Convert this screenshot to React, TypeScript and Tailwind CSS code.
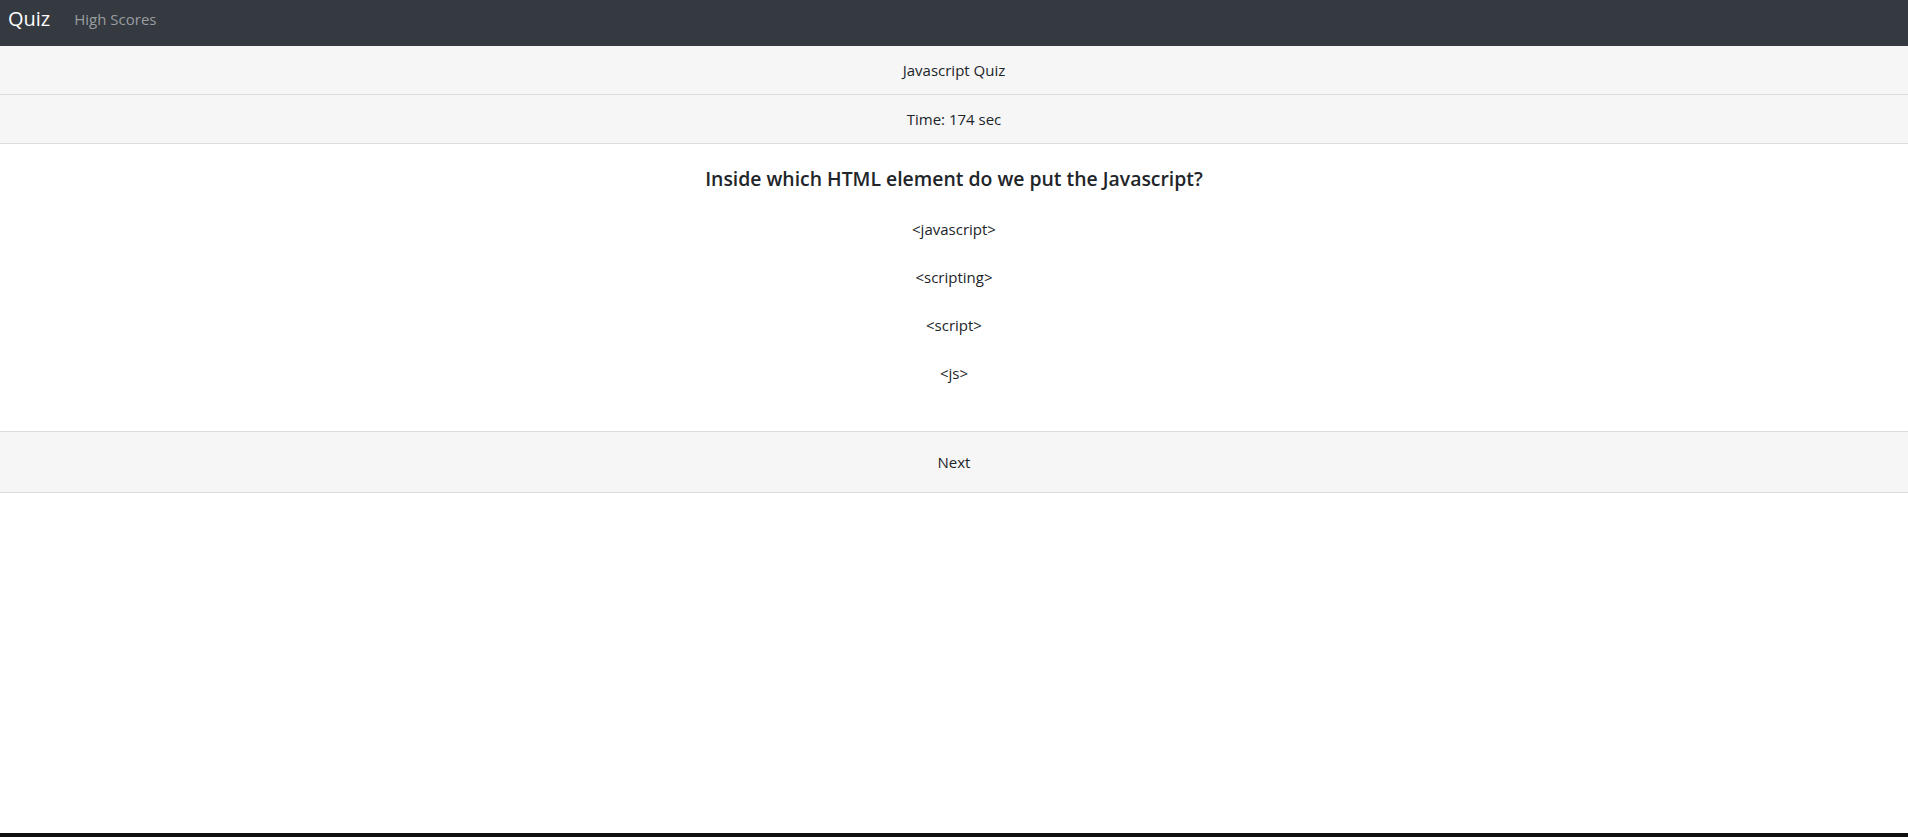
import React from "react";

const options = ["<javascript>", "<scripting>", "<script>", "<js>"];

export default function App() {
  return (
    <div
      className="min-h-screen flex flex-col bg-white text-[#212529]"
      style={{ fontFamily: '"Segoe UI", "Open Sans", sans-serif' }}
    >
      {/* Navbar */}
      <nav className="h-[46px] bg-[#343a40] flex items-center px-2 pb-2">
        <span className="text-[20px] text-white leading-none mr-4">Quiz</span>
        <span className="text-[15px] text-[#999ca0] px-2 leading-none">High Scores</span>
      </nav>

      <div className="h-[49px] bg-[#f6f6f6] border-b border-[#dcdcdc] flex items-center justify-center text-[15px]">
        Javascript Quiz
      </div>
      <div className="h-[49px] bg-[#f6f6f6] border-b border-[#dcdcdc] flex items-center justify-center text-[15px]">
        Time: 174 sec
      </div>

      {/* Question */}
      <div className="pt-[23px] pb-[34px] flex flex-col items-center">
        <h5 className="text-[19.4px] font-semibold leading-6">Inside which HTML element do we put the Javascript?</h5>
        <ul className="mt-[14px] flex flex-col items-center text-[15px]">
          {options.map(o => (
            <li key={o} className="h-12 flex items-center justify-center cursor-pointer">{o}</li>
          ))}
        </ul>
      </div>

      <div className="h-[62px] bg-[#f6f6f6] border-y border-[#dcdcdc] flex items-center justify-center text-[15px]">
        Next
      </div>

      <div className="flex-1" />
      <div className="h-1 bg-[#0f0f0f]" />
    </div>
  );
}
